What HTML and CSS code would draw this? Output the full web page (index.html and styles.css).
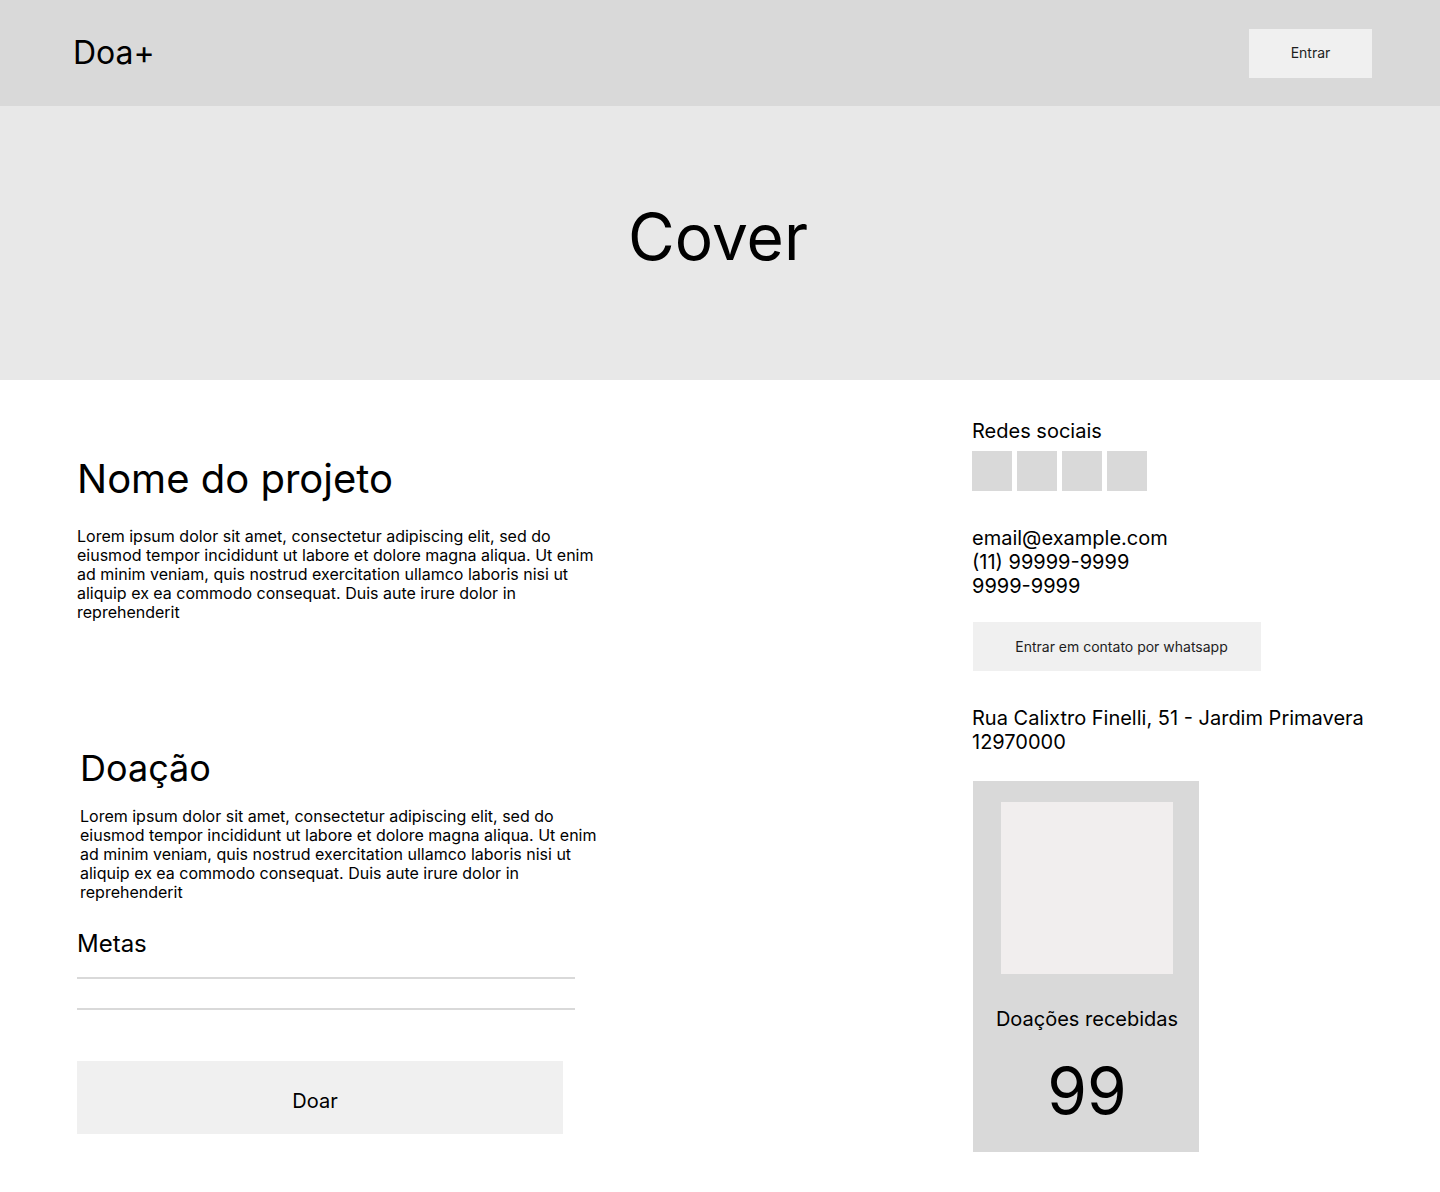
FILE: index.html
```html
<!DOCTYPE html>
<html lang="pt-BR">
<head>
<meta charset="utf-8">
<title>Doa+</title>
<link rel="stylesheet" href="styles.css">
</head>
<body>
<header class="topbar">
  <div class="logo">Doa+</div>
  <button class="btn btn-enter">Entrar</button>
</header>
<section class="cover">
  <h1 class="cover-title">Cover</h1>
</section>
<main class="content">
  <div class="col-left">
    <section class="project">
      <h2 class="project-title">Nome do projeto</h2>
      <p class="text">Lorem ipsum dolor sit amet, consectetur adipiscing elit, sed do eiusmod tempor incididunt ut labore et dolore magna aliqua. Ut enim ad minim veniam, quis nostrud exercitation ullamco laboris nisi ut aliquip ex ea commodo consequat. Duis aute irure dolor in reprehenderit</p>
    </section>
    <section class="donation">
      <h2 class="donation-title">Doação</h2>
      <p class="text">Lorem ipsum dolor sit amet, consectetur adipiscing elit, sed do eiusmod tempor incididunt ut labore et dolore magna aliqua. Ut enim ad minim veniam, quis nostrud exercitation ullamco laboris nisi ut aliquip ex ea commodo consequat. Duis aute irure dolor in reprehenderit</p>
    </section>
    <section class="goals">
      <h3 class="goals-title">Metas</h3>
      <div class="goal-line first"></div>
      <div class="goal-line"></div>
    </section>
    <button class="btn btn-donate">Doar</button>
  </div>
  <aside class="col-right">
    <h3 class="side-title">Redes sociais</h3>
    <div class="socials">
      <span class="social"></span>
      <span class="social"></span>
      <span class="social"></span>
      <span class="social"></span>
    </div>
    <div class="contact">
      <div>email@example.com</div>
      <div>(11) 99999-9999</div>
      <div>9999-9999</div>
    </div>
    <button class="btn btn-whatsapp">Entrar em contato por whatsapp</button>
    <div class="address">
      <div>Rua Calixtro Finelli, 51 - Jardim Primavera</div>
      <div>12970000</div>
    </div>
    <div class="card">
      <div class="card-image"></div>
      <div class="card-label">Doações recebidas</div>
      <div class="card-number">99</div>
    </div>
  </aside>
</main>
</body>
</html>
```

FILE: styles.css
```css
* {
  box-sizing: border-box;
}

body {
  margin: 0;
  background: #ffffff;
  color: #000000;
  font-family: "Inter", "Liberation Sans", sans-serif;
}

h1, h2, h3, p {
  margin: 0;
  font-weight: 400;
}

.btn {
  border: none;
  font-family: "Inter", "Liberation Sans", sans-serif;
  background: #f0f0f0;
  color: #1e1e1e;
  padding: 0;
  cursor: pointer;
}

/* Header */
.topbar {
  height: 106px;
  background: #d9d9d9;
  display: flex;
  align-items: center;
  justify-content: space-between;
  padding: 0 68px 0 73px;
}

.logo {
  font-size: 32px;
  line-height: 39px;
  margin-top: -2px;
}

.btn-enter {
  width: 123px;
  height: 49px;
  font-size: 14px;
  padding-bottom: 2px;
}

/* Cover */
.cover {
  height: 274px;
  background: #e8e8e8;
  display: flex;
  align-items: center;
  justify-content: center;
  padding-bottom: 14px;
  padding-right: 4px;
}

.cover-title {
  font-size: 64px;
  line-height: 77px;
}

/* Content */
.content {
  display: grid;
  grid-template-columns: 895px 1fr;
  padding-left: 77px;
  padding-bottom: 40px;
}

.col-left {
  padding-top: 75px;
  display: flex;
  flex-direction: column;
  align-items: flex-start;
}

.project-title {
  font-size: 40px;
  line-height: 48px;
  margin-bottom: 24px;
}

.text {
  font-size: 16px;
  line-height: 19px;
  width: 522px;
}

.donation {
  margin-top: 124px;
  padding-left: 3px;
}

.donation-title {
  font-size: 36px;
  line-height: 44px;
  margin-bottom: 17px;
}

.goals {
  margin-top: 27px;
  width: 498px;
}

.goals-title {
  font-size: 24px;
  line-height: 29px;
}

.goal-line {
  height: 2px;
  background: #d9d9d9;
  margin-top: 29px;
}

.goal-line.first {
  margin-top: 19px;
}

.btn-donate {
  margin-top: 51px;
  width: 486px;
  height: 73px;
  font-size: 20px;
  color: #000000;
  padding-top: 6px;
  padding-right: 10px;
}

/* Right column */
.col-right {
  padding-top: 39px;
  display: flex;
  flex-direction: column;
  align-items: flex-start;
}

.side-title {
  font-size: 20px;
  line-height: 24px;
}

.socials {
  display: flex;
  gap: 5px;
  margin-top: 8px;
}

.social {
  width: 40px;
  height: 40px;
  background: #d9d9d9;
}

.contact {
  margin-top: 35px;
  font-size: 20px;
  line-height: 24px;
}

.btn-whatsapp {
  margin-top: 24px;
  margin-left: 1px;
  width: 288px;
  height: 49px;
  font-size: 14px;
  padding-left: 9px;
}

.address {
  margin-top: 35px;
  font-size: 20px;
  line-height: 24px;
}

.card {
  margin-top: 27px;
  margin-left: 1px;
  width: 226px;
  height: 371px;
  background: #d9d9d9;
  display: flex;
  flex-direction: column;
  align-items: center;
  padding-top: 21px;
  padding-left: 2px;
}

.card-image {
  width: 172px;
  height: 172px;
  background: #f1eeee;
}

.card-label {
  margin-top: 33px;
  font-size: 20px;
  line-height: 24px;
}

.card-number {
  margin-top: 21px;
  font-size: 64px;
  line-height: 77px;
}
```
